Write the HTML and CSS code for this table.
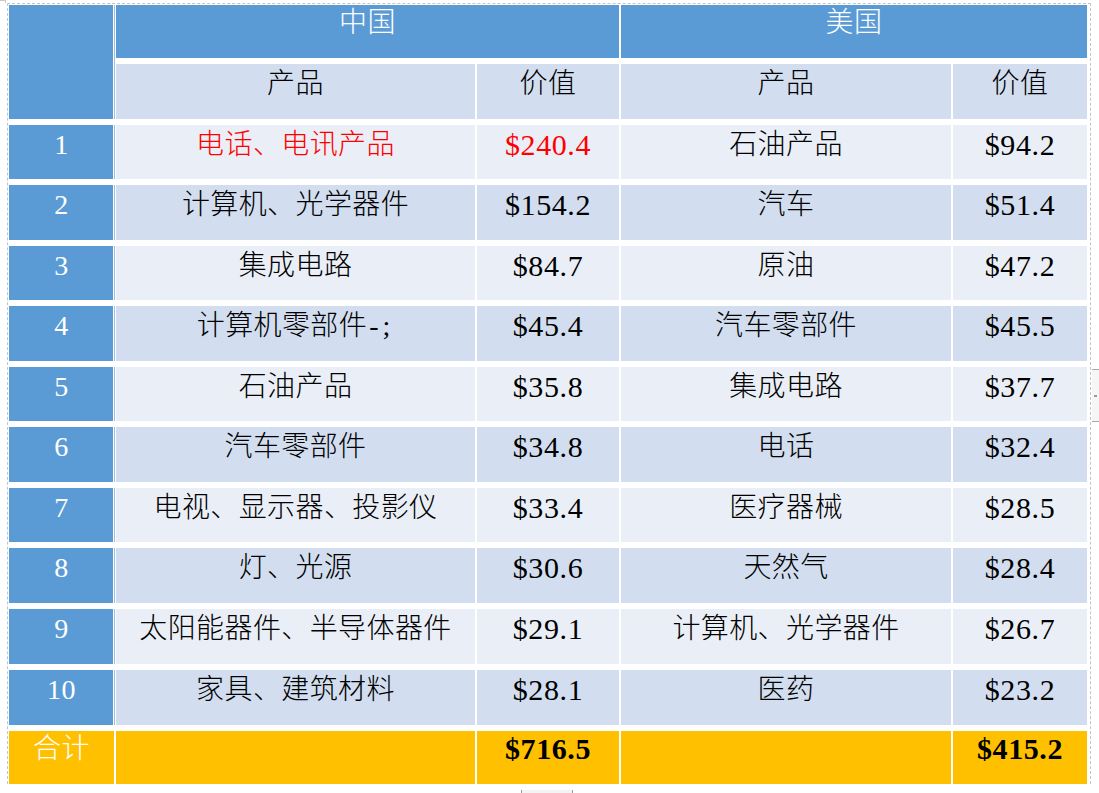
FILE: index.html
```html
<!DOCTYPE html>
<html lang="zh">
<head>
<meta charset="utf-8">
<title>中美出口产品</title>
<link rel="stylesheet" href="styles.css">
</head>
<body>
<div class="handle"></div>
<div class="frame">
  <div class="table">
    <div class="cell corner"></div>
    <div class="cell head country c-cn">中国</div>
    <div class="cell head country c-us">美国</div>
    <div class="cell sub">产品</div>
    <div class="cell sub">价值</div>
    <div class="cell sub">产品</div>
    <div class="cell sub">价值</div>

    <div class="cell idx">1</div>
    <div class="cell odd red">电话、电讯产品</div>
    <div class="cell odd num red">$240.4</div>
    <div class="cell odd">石油产品</div>
    <div class="cell odd num">$94.2</div>

    <div class="cell idx">2</div>
    <div class="cell even">计算机、光学器件</div>
    <div class="cell even num">$154.2</div>
    <div class="cell even">汽车</div>
    <div class="cell even num">$51.4</div>

    <div class="cell idx">3</div>
    <div class="cell odd">集成电路</div>
    <div class="cell odd num">$84.7</div>
    <div class="cell odd">原油</div>
    <div class="cell odd num">$47.2</div>

    <div class="cell idx">4</div>
    <div class="cell even">计算机零部件<span class="wide">-;</span></div>
    <div class="cell even num">$45.4</div>
    <div class="cell even">汽车零部件</div>
    <div class="cell even num">$45.5</div>

    <div class="cell idx">5</div>
    <div class="cell odd">石油产品</div>
    <div class="cell odd num">$35.8</div>
    <div class="cell odd">集成电路</div>
    <div class="cell odd num">$37.7</div>

    <div class="cell idx">6</div>
    <div class="cell even">汽车零部件</div>
    <div class="cell even num">$34.8</div>
    <div class="cell even">电话</div>
    <div class="cell even num">$32.4</div>

    <div class="cell idx">7</div>
    <div class="cell odd">电视、显示器、投影仪</div>
    <div class="cell odd num">$33.4</div>
    <div class="cell odd">医疗器械</div>
    <div class="cell odd num">$28.5</div>

    <div class="cell idx">8</div>
    <div class="cell even">灯、光源</div>
    <div class="cell even num">$30.6</div>
    <div class="cell even">天然气</div>
    <div class="cell even num">$28.4</div>

    <div class="cell idx">9</div>
    <div class="cell odd">太阳能器件、半导体器件</div>
    <div class="cell odd num">$29.1</div>
    <div class="cell odd">计算机、光学器件</div>
    <div class="cell odd num">$26.7</div>

    <div class="cell idx">10</div>
    <div class="cell even">家具、建筑材料</div>
    <div class="cell even num">$28.1</div>
    <div class="cell even">医药</div>
    <div class="cell even num">$23.2</div>

    <div class="cell total label">合计</div>
    <div class="cell total"></div>
    <div class="cell total num bold">$716.5</div>
    <div class="cell total"></div>
    <div class="cell total num bold">$415.2</div>
  </div>
</div>
<div class="side-tab"><span></span></div>
<div class="bottom-tab"></div>
</body>
</html>
```

FILE: styles.css
```css
html, body {
  margin: 0;
  padding: 0;
  background: #ffffff;
}

body {
  width: 1099px;
  height: 793px;
  overflow: hidden;
  position: relative;
  font-family: "Liberation Serif", "Noto Sans CJK SC", serif;
}

.handle {
  position: absolute;
  left: 0;
  top: 0;
  width: 6px;
  height: 3px;
  border-top: 1px solid #c9c9c9;
  border-right: 1px solid #c9c9c9;
  box-sizing: border-box;
}

.frame {
  margin: 3px 0 0 7px;
  width: 1080px;
  padding: 1px 1px 0 1px;
  border-top: 1px dashed #c4c4c4;
  border-left: 1px dashed #b9c6d6;
  border-right: 1px dashed #c4c4c4;
}

.table {
  display: grid;
  grid-template-columns: 105px 359px 142px 330px 134px;
  grid-template-rows: 53px 55px 54px 55px 54px 55px 54px 55px 54px 55px 55px 55px 53px;
  column-gap: 2px;
  row-gap: 6px;
  background: #ffffff;
}

.cell {
  display: flex;
  justify-content: center;
  align-items: flex-start;
  font-size: 28px;
  font-weight: 300;
  line-height: 40px;
  letter-spacing: 0.4px;
  color: #000000;
  white-space: nowrap;
}

.wide {
  letter-spacing: 4px;
  padding-left: 2px;
}

.corner {
  grid-row: 1 / span 2;
  background: #5b9bd5;
  box-shadow: inset -1px 0 0 #ffffff, 1px 0 0 #9dbfe6;
}

.head {
  background: #5b9bd5;
  color: #ffffff;
  line-height: 36px;
}

.c-cn {
  grid-column: 2 / span 2;
}

.c-us {
  grid-column: 4 / span 2;
}

.sub {
  background: #d2deef;
}

.odd {
  background: #eaeff7;
}

.even {
  background: #d2deef;
}

.idx {
  background: #5b9bd5;
  color: #ffffff;
  font-size: 28px;
  box-shadow: inset -1px 0 0 #ffffff, 1px 0 0 #9dbfe6;
}

.num {
  font-size: 30px;
  font-weight: normal;
  letter-spacing: 0.6px;
}

.red {
  color: #ff0000;
}

.total {
  background: #ffc000;
  line-height: 36px;
}

.label {
  color: #ffffff;
}

.bold {
  font-weight: bold;
}

.side-tab {
  position: absolute;
  left: 1092px;
  top: 369px;
  width: 7px;
  height: 53px;
  border-top: 1px solid #a9a9a9;
  border-bottom: 1px solid #a9a9a9;
  background: #f6f6f6;
  box-sizing: border-box;
}

.side-tab span {
  position: absolute;
  left: 2px;
  top: 25px;
  width: 3px;
  height: 2px;
  background: #9a9a9a;
}

.bottom-tab {
  position: absolute;
  left: 521px;
  top: 790px;
  width: 52px;
  height: 3px;
  background: #f4f4f4;
  border-left: 1px solid #9a9a9a;
  border-right: 1px solid #9a9a9a;
  box-sizing: border-box;
}
```
